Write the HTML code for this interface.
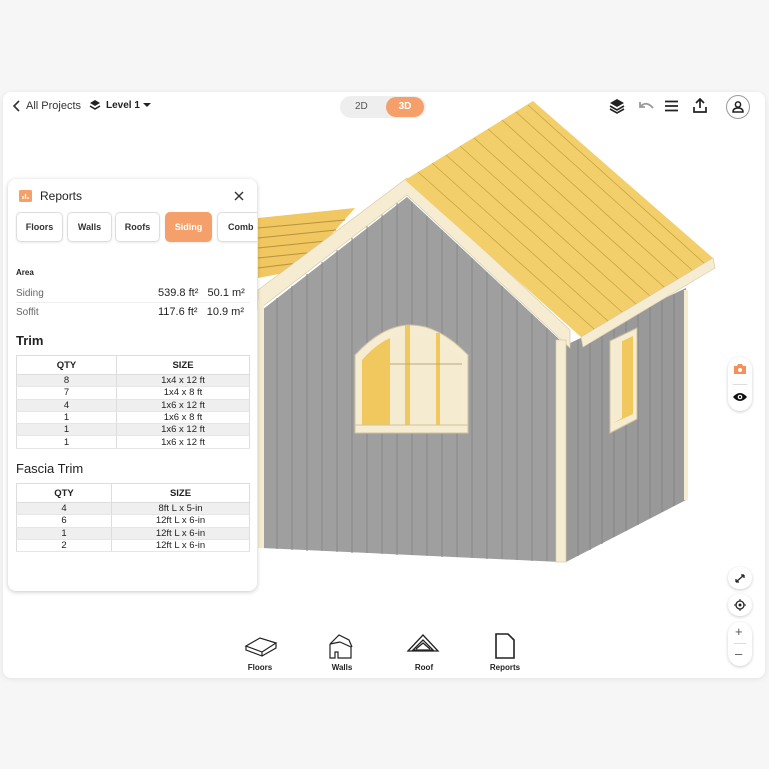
<!DOCTYPE html>
<html><head><meta charset="utf-8"><style>
*{box-sizing:border-box;margin:0;padding:0}
body{width:769px;height:769px;background:#f6f6f6;font-family:"Liberation Sans",sans-serif;position:relative;overflow:hidden;color:#222}
.card{position:absolute;left:3px;top:92px;width:762px;height:586px;background:#fff;border-radius:8px;box-shadow:0 1px 6px rgba(0,0,0,.08)}
.abs{position:absolute}
.panel{position:absolute;left:8px;top:179px;width:249px;height:412px;background:#fff;border-radius:8px;box-shadow:0 1px 5px rgba(0,0,0,.22);overflow:hidden}
.tab{position:absolute;top:33px;height:30px;border:1px solid #ddd;border-radius:5px;font-size:9px;font-weight:bold;color:#333;display:flex;align-items:center;justify-content:center;box-shadow:0 1px 2px rgba(0,0,0,.08)}
table{position:absolute;left:8px;width:234px;border-collapse:collapse;font-size:9.5px;text-align:center;border:1px solid #ddd}
td,th{border-right:1px solid #ddd;height:12.3px;line-height:11px;padding:0;font-weight:normal}
th{height:19px;font-weight:bold;border-bottom:1px solid #ddd}
tr:nth-child(even) td{background:#efefef}
td{border-bottom:1px solid #e6e6e6}
.bt{position:absolute;top:634px;font-size:8px;font-weight:bold;text-align:center;width:60px}
.rb{position:absolute;left:728px;width:24px;background:#fff;border-radius:12px;box-shadow:0 1px 3px rgba(0,0,0,.2)}
</style></head><body>
<div class="card"></div>
<svg class="abs" style="left:0;top:0" width="769" height="769">
 <polygon points="258,218 355,208 300,270 258,278" fill="#f0c760"/>
 <g stroke="#b89240" stroke-width="1">
  <line x1="258" y1="228" x2="345" y2="220"/><line x1="258" y1="238" x2="336" y2="230"/><line x1="258" y1="248" x2="326" y2="241"/><line x1="258" y1="258" x2="316" y2="252"/><line x1="258" y1="268" x2="306" y2="262"/>
 </g>
 <polygon points="262,310 407,197 560,340 560,562 262,548" fill="#9f9f9f"/>
 <g stroke="#888" stroke-width="1">
  <line x1="277" y1="298" x2="277" y2="549"/><line x1="292" y1="286" x2="292" y2="550"/><line x1="307" y1="274" x2="307" y2="551"/><line x1="322" y1="262" x2="322" y2="551"/><line x1="337" y1="250" x2="337" y2="552"/><line x1="352" y1="238" x2="352" y2="553"/><line x1="367" y1="226" x2="367" y2="553"/><line x1="382" y1="214" x2="382" y2="554"/><line x1="397" y1="202" x2="397" y2="555"/><line x1="412" y1="202" x2="412" y2="555"/><line x1="427" y1="216" x2="427" y2="556"/><line x1="442" y1="230" x2="442" y2="557"/><line x1="457" y1="244" x2="457" y2="557"/><line x1="472" y1="258" x2="472" y2="558"/><line x1="487" y1="272" x2="487" y2="559"/><line x1="502" y1="286" x2="502" y2="559"/><line x1="517" y1="300" x2="517" y2="560"/><line x1="532" y1="314" x2="532" y2="561"/><line x1="547" y1="328" x2="547" y2="561"/>
 </g>
 <polygon points="566,345 686,288 686,500 566,562" fill="#999"/>
 <g stroke="#858585" stroke-width="1">
  <line x1="578" y1="340" x2="578" y2="556"/><line x1="590" y1="334" x2="590" y2="550"/><line x1="602" y1="328" x2="602" y2="544"/><line x1="614" y1="322" x2="614" y2="537"/><line x1="626" y1="317" x2="626" y2="531"/><line x1="638" y1="311" x2="638" y2="525"/><line x1="650" y1="305" x2="650" y2="518"/><line x1="662" y1="300" x2="662" y2="512"/><line x1="674" y1="294" x2="674" y2="506"/>
 </g>
 <polygon points="258,290 407,178 570,330 570,348 407,195 258,310" fill="#f5ecd2" stroke="#d8cba8" stroke-width=".7"/>
 <rect x="556" y="340" width="10" height="222" fill="#f5ecd2" stroke="#d8cba8" stroke-width=".7"/>
 <rect x="684" y="290" width="4" height="210" fill="#f5ecd2"/>
 <rect x="258" y="300" width="6" height="248" fill="#f5ecd2"/>
 <polygon points="405,180 533,101 713,258 581,337" fill="#f2cf6a"/>
 <polygon points="581,337 713,258 715,268 583,347" fill="#f5ecd2" stroke="#d8cba8" stroke-width=".7"/>
 <g stroke="#c9a540" stroke-width=".8">
  <line x1="418" y1="172" x2="594" y2="329"/><line x1="432" y1="163" x2="608" y2="321"/><line x1="446" y1="155" x2="622" y2="312"/><line x1="460" y1="146" x2="636" y2="304"/><line x1="474" y1="138" x2="650" y2="296"/><line x1="488" y1="129" x2="664" y2="287"/><line x1="502" y1="120" x2="678" y2="279"/><line x1="516" y1="112" x2="692" y2="270"/><line x1="528" y1="105" x2="704" y2="263"/>
 </g>
 <path d="M355,432 L355,355 Q410,295 468,355 L468,432 Z" fill="#f5ecd2" stroke="#cfc3a0" stroke-width="1"/>
 <path d="M362,425 L362,360 Q410,308 462,360 L462,425 Z" fill="#f5ebd0"/>
 <path d="M362,425 L362,360 Q375,345 390,338 L390,425 Z" fill="#f1c85e"/>
 <rect x="405" y="325" width="5" height="100" fill="#f1c85e"/><rect x="436" y="333" width="4" height="92" fill="#f1c85e"/>
 <line x1="390" y1="364" x2="462" y2="364" stroke="#bba87a"/>
 <rect x="355" y="425" width="113" height="8" fill="#f5ecd2" stroke="#cfc3a0"/>
 <polygon points="610,341 637,328 637,419 610,433" fill="#f5ecd2" stroke="#cfc3a0"/>
 <polygon points="614,345 633,336 633,414 614,423" fill="#f1c85e"/>
 <polygon points="614,345 622,341 622,418 614,423" fill="#f5ebd0"/>
</svg>

<svg class="abs" style="left:12px;top:100px" width="10" height="12"><path d="M7,1 L2,6 L7,11" fill="none" stroke="#333" stroke-width="1.6"/></svg>
<div class="abs" style="left:26px;top:100px;font-size:11px;color:#333">All Projects</div>
<svg class="abs" style="left:89px;top:99px" width="12" height="12"><path d="M6,1 L11,4 L6,7 L1,4Z" fill="#222"/><path d="M1,7 L6,10 L11,7" fill="none" stroke="#222" stroke-width="1.5"/></svg>
<div class="abs" style="left:106px;top:100px;font-size:10px;font-weight:bold">Level 1</div>
<svg class="abs" style="left:143px;top:103px" width="8" height="5"><path d="M0,0 L8,0 L4,4Z" fill="#222"/></svg>
<div class="abs" style="left:340px;top:96px;width:86px;height:22px;background:#eee;border-radius:11px"></div>
<div class="abs" style="left:355px;top:101px;font-size:10px;color:#555">2D</div>
<div class="abs" style="left:386px;top:97px;width:38px;height:20px;background:#f5a06a;border-radius:10px;color:#fff;font-size:10px;font-weight:bold;text-align:center;line-height:20px">3D</div>
<svg class="abs" style="left:609px;top:98px" width="16" height="16"><path d="M8,1 L15,5 L8,9 L1,5Z" fill="#222"/><path d="M1,8 L8,12 L15,8 M1,11 L8,15 L15,11" fill="none" stroke="#222" stroke-width="1.6"/></svg>
<svg class="abs" style="left:637px;top:99px" width="18" height="14"><path d="M3,3 L3,8 L8,8 M3,8 Q9,1 16,9" fill="none" stroke="#999" stroke-width="1.8"/></svg>
<svg class="abs" style="left:665px;top:100px" width="13" height="12"><path d="M0,1.5H13M0,6H13M0,10.5H13" stroke="#222" stroke-width="1.8"/></svg>
<svg class="abs" style="left:692px;top:97px" width="16" height="17"><path d="M8,11 V2 M4,6 L8,2 L12,6 M2,10 V15 H14 V10" fill="none" stroke="#222" stroke-width="1.7"/></svg>
<div class="abs" style="left:726px;top:95px;width:24px;height:24px;border:1px solid #999;border-radius:50%"></div>
<svg class="abs" style="left:731px;top:100px" width="14" height="14"><circle cx="7" cy="4.5" r="2.6" fill="none" stroke="#222" stroke-width="1.5"/><path d="M2,12 Q2,8 7,8 Q12,8 12,12Z" fill="none" stroke="#222" stroke-width="1.5"/></svg>

<div class="panel">
 <svg class="abs" style="left:11px;top:11px" width="13" height="12"><rect width="13" height="12" rx="1.5" fill="#f5a06a"/><path d="M4,9V6M6.5,9V4M9,9V7" stroke="#fff" stroke-width="1.3"/></svg>
 <div class="abs" style="left:32px;top:10px;font-size:12px">Reports</div>
 <svg class="abs" style="left:226px;top:12px" width="10" height="10"><path d="M1,1L9,9M9,1L1,9" stroke="#333" stroke-width="1.4"/></svg>
 <div class="tab" style="left:8px;width:47px">Floors</div>
 <div class="tab" style="left:59px;width:45px">Walls</div>
 <div class="tab" style="left:107px;width:45px">Roofs</div>
 <div class="tab" style="left:157px;width:47px;background:#f5a06a;border-color:#f5a06a;color:#fff">Siding</div>
 <div class="tab" style="left:209px;width:50px;justify-content:flex-start;padding-left:10px">Comb</div>
 <div class="abs" style="left:8px;top:89px;font-size:8px;font-weight:bold">Area</div>
 <div class="abs" style="left:8px;top:109px;font-size:10px;color:#666">Siding</div>
 <div class="abs" style="left:150px;top:108px;font-size:11px">539.8 ft²&nbsp;&nbsp;&nbsp;50.1 m²</div>
 <div class="abs" style="left:8px;top:123px;width:234px;border-top:1px solid #eee"></div>
 <div class="abs" style="left:8px;top:128px;font-size:10px;color:#666">Soffit</div>
 <div class="abs" style="left:150px;top:127px;font-size:11px">117.6 ft²&nbsp;&nbsp;&nbsp;10.9 m²</div>
 <div class="abs" style="left:8px;top:154px;font-size:13px;font-weight:bold;color:#222">Trim</div>
 <table style="top:176px"><tr><th style="width:100px">QTY</th><th>SIZE</th></tr>
 <tr><td>8</td><td>1x4 x 12 ft</td></tr><tr><td>7</td><td>1x4 x 8 ft</td></tr><tr><td>4</td><td>1x6 x 12 ft</td></tr><tr><td>1</td><td>1x6 x 8 ft</td></tr><tr><td>1</td><td>1x6 x 12 ft</td></tr><tr><td>1</td><td>1x6 x 12 ft</td></tr></table>
 <div class="abs" style="left:8px;top:282px;font-size:13px;color:#222">Fascia Trim</div>
 <table style="top:304px"><tr><th style="width:95px">QTY</th><th>SIZE</th></tr>
 <tr><td>4</td><td>8ft L x 5-in</td></tr><tr><td>6</td><td>12ft L x 6-in</td></tr><tr><td>1</td><td>12ft L x 6-in</td></tr><tr><td>2</td><td>12ft L x 6-in</td></tr></table>
</div>

<div class="rb" style="top:357px;height:54px"></div>
<svg class="abs" style="left:733px;top:363px" width="14" height="12"><path d="M1,3H4L5,1H9L10,3H13V11H1Z" fill="#f5905a"/><circle cx="7" cy="7" r="2" fill="#fff"/></svg>
<div class="abs" style="left:733px;top:384px;width:14px;border-top:1px solid #ddd"></div>
<svg class="abs" style="left:732px;top:392px" width="16" height="10"><path d="M1,5Q8,-3 15,5Q8,13 1,5Z" fill="#111"/><circle cx="8" cy="5" r="2.3" fill="#fff"/><circle cx="8" cy="5" r="1.1" fill="#111"/></svg>
<div class="rb" style="top:567px;height:22px"></div>
<svg class="abs" style="left:734px;top:573px" width="12" height="11"><path d="M2,9L10,2M2,9V6M2,9H5M10,2H7M10,2V5" stroke="#222" stroke-width="1.3" fill="none"/></svg>
<div class="rb" style="top:594px;height:22px"></div>
<svg class="abs" style="left:734px;top:599px" width="12" height="12"><circle cx="6" cy="6" r="4" fill="none" stroke="#222" stroke-width="1.3"/><circle cx="6" cy="6" r="1.5" fill="#222"/><path d="M6,0V2M6,10V12M0,6H2M10,6H12" stroke="#222"/></svg>
<div class="rb" style="top:622px;height:44px"></div>
<div class="abs" style="left:735px;top:624px;font-size:13px;color:#555">+</div>
<div class="abs" style="left:734px;top:643px;width:12px;border-top:1px solid #ddd"></div>
<div class="abs" style="left:735px;top:646px;font-size:13px;color:#555">–</div>

<svg class="abs" style="left:244px;top:636px" width="34" height="22"><path d="M2,10L16,2L32,7L18,16Z M2,10V14L18,20L32,12V7 M18,16V20" fill="none" stroke="#222" stroke-width="1.2"/></svg>
<div class="bt" style="left:230px;top:663px">Floors</div>
<svg class="abs" style="left:327px;top:632px" width="28" height="28"><path d="M3,12L12,3L22,8L25,15 M3,12V26H8V20H11V26H24V15L13,10 M3,12L13,10" fill="none" stroke="#222" stroke-width="1.2"/></svg>
<div class="bt" style="left:312px;top:663px">Walls</div>
<svg class="abs" style="left:406px;top:633px" width="34" height="24"><path d="M2,18L17,2L32,18Z M7,17L17,7L27,17Z M10,16L17,10L24,16" fill="none" stroke="#222" stroke-width="1.3"/></svg>
<div class="bt" style="left:394px;top:663px">Roof</div>
<svg class="abs" style="left:494px;top:632px" width="22" height="28"><path d="M2,2H14L20,8V26H2Z" fill="none" stroke="#222" stroke-width="1.6"/></svg>
<div class="bt" style="left:475px;top:663px">Reports</div>
</body></html>
